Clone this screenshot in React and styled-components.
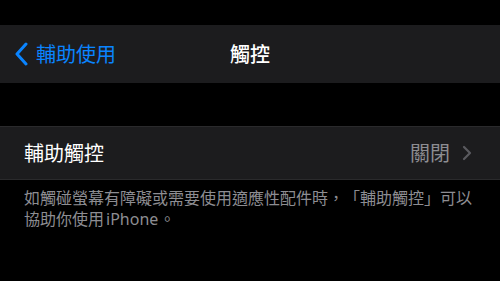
import React from "react";
import styled, { createGlobalStyle } from "styled-components";

const GlobalStyle = createGlobalStyle`
  html, body {
    margin: 0;
    padding: 0;
    background: #000;
  }
  body {
    font-family: "Noto Sans CJK TC", "Noto Sans", sans-serif;
    -webkit-font-smoothing: antialiased;
    text-spacing-trim: space-all;
  }
`;

const Screen = styled.div`
  width: 500px;
  height: 281px;
  background: #000;
  display: flex;
  flex-direction: column;
  overflow: hidden;
`;

const StatusGap = styled.div`
  height: 25px;
  flex-shrink: 0;
`;

const NavBar = styled.div`
  height: 58px;
  flex-shrink: 0;
  background: #1c1c1e;
  display: grid;
  grid-template-columns: 1fr auto 1fr;
  align-items: center;
`;

const BackButton = styled.div`
  display: flex;
  align-items: center;
  gap: 8px;
  padding-left: 14px;
  color: #0a84ff;
  font-size: 20px;
  line-height: 24px;
`;

const Title = styled.div`
  color: #fff;
  font-size: 20px;
  font-weight: 500;
  line-height: 24px;
`;

const SectionGap = styled.div`
  height: 43px;
  flex-shrink: 0;
`;

const Row = styled.div`
  height: 54px;
  flex-shrink: 0;
  background: #1c1c1e;
  border-top: 1px solid #2a2a2c;
  border-bottom: 1px solid #2a2a2c;
  box-sizing: border-box;
  display: flex;
  align-items: center;
  padding: 0 28px 0 24px;
`;

const RowLabel = styled.div`
  color: #fff;
  font-size: 20px;
  line-height: 24px;
  flex: 1;
`;

const RowValue = styled.div`
  color: #8d8d92;
  font-size: 20px;
  line-height: 24px;
  margin-right: 12px;
`;

const Footer = styled.div`
  padding: 7px 20px 0 24px;
  color: #8d8d92;
  font-size: 16px;
  line-height: 21px;
  text-spacing-trim: space-all;
  white-space: nowrap;
`;

const Latin = styled.span`
  font-family: "Noto Sans", sans-serif;
  margin: 0 1px 0 2px;
`;

const ChevronLeft = () => (
  <svg width="14" height="24" viewBox="0 0 14 24" fill="none">
    <path
      d="M12 2 L3 12 L12 22"
      stroke="#0a84ff"
      strokeWidth="3"
      strokeLinecap="round"
      strokeLinejoin="round"
    />
  </svg>
);

const ChevronRight = () => (
  <svg width="10" height="16" viewBox="0 0 10 16" fill="none">
    <path
      d="M2 2 L8 8 L2 14"
      stroke="#5a5a5f"
      strokeWidth="2.2"
      strokeLinecap="round"
      strokeLinejoin="round"
    />
  </svg>
);

export default function App() {
  return (
    <>
      <GlobalStyle />
      <Screen>
        <StatusGap />
        <NavBar>
          <BackButton>
            <ChevronLeft />
            <span>輔助使用</span>
          </BackButton>
          <Title>觸控</Title>
          <div />
        </NavBar>
        <SectionGap />
        <Row>
          <RowLabel>輔助觸控</RowLabel>
          <RowValue>關閉</RowValue>
          <ChevronRight />
        </Row>
        <Footer>
          如觸碰螢幕有障礙或需要使用適應性配件時，「輔助觸控」可以
          <br />
          協助你使用<Latin>iPhone</Latin>。
        </Footer>
      </Screen>
    </>
  );
}
